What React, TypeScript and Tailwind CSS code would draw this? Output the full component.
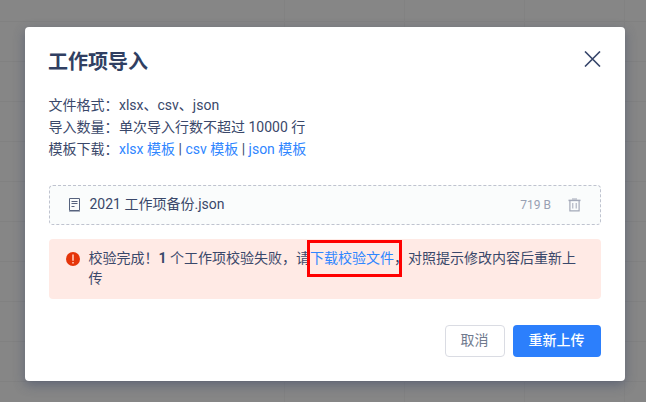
import React from "react";

const rows = [21, 61, 101, 141, 181, 221, 261, 301, 341, 381];
const columns = [284, 404, 524, 624];

function BoardGrid() {
  return (
    <svg className="absolute inset-0" width="646" height="402" shapeRendering="crispEdges">
      {rows.map((y) => (
        <rect key={y} x="0" y={y} width="646" height="1" fill="#818181" />
      ))}
      {columns.map((x) => (
        <rect key={x} x={x} y="0" width="1" height="402" fill="#828282" />
      ))}
    </svg>
  );
}

function InfoRow({ label, children }: { label: string; children: React.ReactNode }) {
  return (
    <div className="flex h-[22px] items-center whitespace-nowrap">
      <span className="w-[70.5px] shrink-0">{label}</span>
      <span>{children}</span>
    </div>
  );
}

function TemplateLink({ children }: { children: React.ReactNode }) {
  return <a className="text-[#2f86ff]">{children}</a>;
}

export default function App() {
  return (
    <div className="relative h-[402px] w-[646px] overflow-hidden bg-[#868686] px-[25px] pt-[27px] font-[Roboto,'Noto_Sans_CJK_SC',sans-serif] text-sm text-[#3a486a]">
      <BoardGrid />
      <div className="relative flex h-[354px] w-[600px] flex-col rounded bg-white px-6 shadow-[0_4px_12px_rgba(48,63,98,0.45)]">
        <div className="-ml-px flex h-[67px] items-center justify-between pt-[2px]">
          <h1 className="text-[20px] font-bold leading-7 text-[#303f62]">工作项导入</h1>
          <svg className="mb-[6px]" width="17" height="16" viewBox="0 0 17 16" fill="none" stroke="#36456a" strokeWidth="1.6">
            <path d="M1 .5l15 15M16 .5L1 15.5" />
          </svg>
        </div>
        <div className="-ml-[0.5px]">
          <InfoRow label="文件格式：">xlsx、csv、json</InfoRow>
          <InfoRow label="导入数量：">单次导入行数不超过 10000 行</InfoRow>
          <InfoRow label="模板下载：">
            <TemplateLink>xlsx 模板</TemplateLink> | <TemplateLink>csv 模板</TemplateLink> | <TemplateLink>json 模板</TemplateLink>
          </InfoRow>
        </div>
        <div className="mt-[25px] flex h-10 items-center rounded border border-dashed border-[#bfc3cf] bg-[#fafcfc] px-[18px]">
          <svg width="13" height="14" viewBox="0 0 13 14" fill="none" stroke="#56627d">
            <path d="M1.5 .5h10v12h-10z" />
            <path d="M1 13.5h11" stroke="#a8afbd" />
            <path d="M3.5 3.5h6M3.5 5.5h6M3.5 8.5h3" />
          </svg>
          <span className="ml-[8.5px] pb-[2px]">2021 工作项备份.json</span>
          <span className="ml-auto text-xs text-[#98a0b3]">719 B</span>
          <svg className="ml-[17px] mr-px" width="13" height="14" viewBox="0 0 13 14" fill="none" stroke="#a3a9b8">
            <path d="M4 1h5" />
            <path d="M.5 2.4h12" strokeWidth="1.5" />
            <path d="M1.9 3v9.8h9.2V3" strokeWidth="1.2" />
            <path d="M4.8 5v5.5M8.2 5v5.5" />
          </svg>
        </div>
        <div className="mt-[14px] flex h-[60px] rounded bg-[#ffeae5] pl-[17px] pt-[9px]">
          <svg className="mt-[4px] shrink-0" width="14" height="14" viewBox="0 0 14 14">
            <circle cx="7" cy="7" r="7" fill="#e5350a" />
            <path d="M7 2.5v6.2M7 9.9v1.7" stroke="#ffb8a5" strokeWidth="1.8" />
          </svg>
          <p className="ml-[8.5px] leading-5">
            <span className="whitespace-nowrap">
              校验完成！<b>1</b> 个工作项校验失败，请
              <span className="relative text-[#2f86ff]">
                下载校验文件
                <span className="absolute -left-[3px] -top-[10px] h-[37px] w-[95px] border-[3px] border-[#ff0000]" />
              </span>
              ，对照提示修改内容后重新上
            </span>
            <br />传
          </p>
        </div>
        <div className="mt-[26px] flex justify-end gap-2">
          <button className="h-8 w-[60px] rounded border border-[#dadce3] pb-[2px] pr-px text-[#707a8e]">取消</button>
          <button className="h-8 w-[88px] rounded bg-[#2c7ffc] pb-[2px] pr-px font-medium text-white">重新上传</button>
        </div>
      </div>
    </div>
  );
}
